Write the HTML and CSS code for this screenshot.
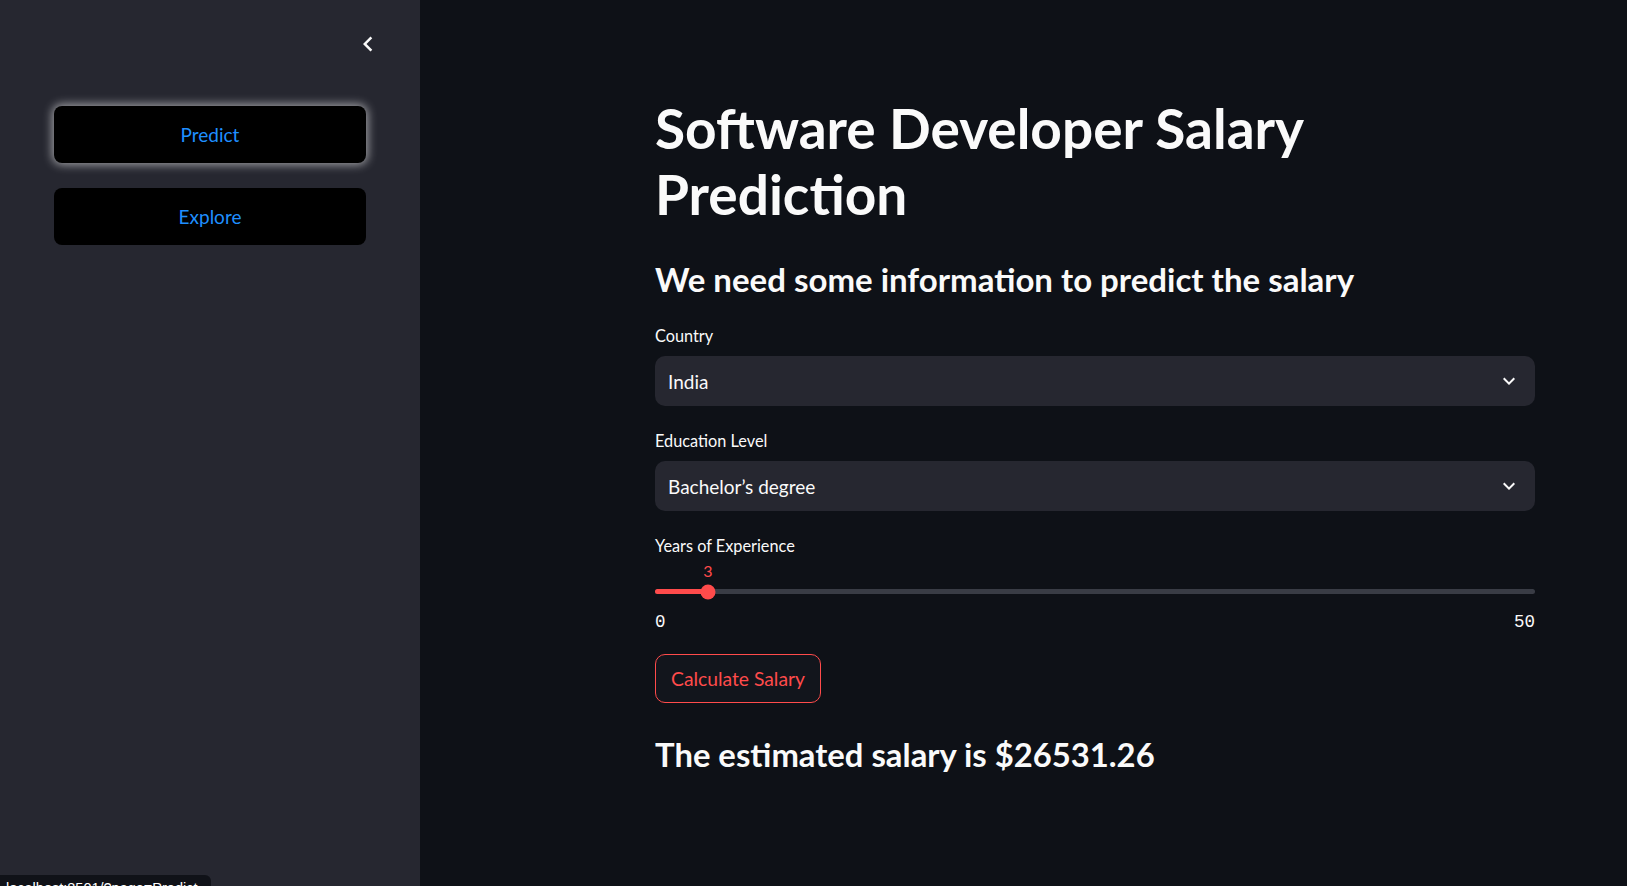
FILE: index.html
```html
<!DOCTYPE html>
<html lang="en">
<head>
<meta charset="utf-8">
<title>Salary Prediction</title>
<link rel="stylesheet" href="styles.css">
</head>
<body>
<div class="app">
  <aside class="sidebar">
    <div class="sidebar-head">
      <svg class="collapse-icon" viewBox="0 0 24 24" width="30" height="30"><path d="M15.41 7.41L14 6l-6 6 6 6 1.41-1.41L10.83 12z" fill="#fafafa"/></svg>
    </div>
    <nav class="nav">
      <div class="nav-btn active">Predict</div>
      <div class="nav-btn">Explore</div>
    </nav>
  </aside>
  <main class="main">
    <div class="content">
      <h1 class="title">Software Developer Salary Prediction</h1>
      <h3 class="subtitle">We need some information to predict the salary</h3>

      <label class="field-label">Country</label>
      <div class="select">
        <span class="select-value">India</span>
        <svg class="select-icon" viewBox="0 0 24 24" width="24" height="24"><path d="M16.59 8.59L12 13.17 7.41 8.59 6 10l6 6 6-6z" fill="#fafafa"/></svg>
      </div>

      <label class="field-label">Education Level</label>
      <div class="select">
        <span class="select-value">Bachelor’s degree</span>
        <svg class="select-icon" viewBox="0 0 24 24" width="24" height="24"><path d="M16.59 8.59L12 13.17 7.41 8.59 6 10l6 6 6-6z" fill="#fafafa"/></svg>
      </div>

      <label class="field-label">Years of Experience</label>
      <div class="slider">
        <div class="slider-value-row"><span class="slider-value" style="left:6%">3</span></div>
        <div class="slider-track">
          <div class="slider-fill" style="width:6%"></div>
          <div class="slider-thumb" style="left:6%"></div>
        </div>
        <div class="slider-ticks"><span>0</span><span>50</span></div>
      </div>

      <button class="calc-btn">Calculate Salary</button>

      <h3 class="result">The estimated salary is $26531.26</h3>
    </div>
  </main>
</div>
<div class="status">localhost:8501/?page=Predict</div>
</body>
</html>
```

FILE: styles.css
```css
* { box-sizing: border-box; }
html, body { margin: 0; height: 100%; }
body {
  background: #0e1117;
  color: #fafafa;
  font-family: Lato, "Noto Sans", sans-serif;
  overflow: hidden;
}
.app { display: flex; height: 100vh; }

.sidebar {
  flex: 0 0 420px;
  background: #262730;
  padding: 29px 54px 0;
  display: flex;
  flex-direction: column;
}
.sidebar-head {
  display: flex;
  justify-content: flex-end;
  height: 30px;
  margin-right: -17px;
}
.collapse-icon { display: block; }
.nav {
  margin-top: 47px;
  display: flex;
  flex-direction: column;
  gap: 25px;
}
.nav-btn {
  height: 57px;
  background: #000;
  border-radius: 8px;
  color: #1f8fff;
  font-size: 19px;
  display: flex;
  align-items: center;
  justify-content: center;
}
.nav-btn.active { box-shadow: 0 0 10px 2px rgba(255,255,255,0.55); }

.main { flex: 1; padding: 95px 0 0 235px; }
.content { width: 880px; display: flex; flex-direction: column; align-items: flex-start; }

.title {
  margin: 0;
  font-size: 55px;
  font-weight: 700;
  line-height: 66px;
  width: 100%;
}
.subtitle {
  margin: 30px 0 0;
  font-size: 33px;
  font-weight: 700;
  line-height: 44px;
}
.field-label {
  display: block;
  margin-top: 25px;
  font-size: 16.3px;
  line-height: 20px;
}
.select + .field-label { margin-top: 25px; }

.select {
  margin-top: 10px;
  width: 100%;
  height: 50px;
  background: #262730;
  border-radius: 10px;
  display: flex;
  align-items: center;
  justify-content: space-between;
  padding: 0 14px 0 13px;
}
.select-value { font-size: 19px; }
.select-icon { display: block; }

.slider { width: 100%; }
.slider-value-row { position: relative; height: 20px; margin-top: 5px; }
.slider-value {
  position: absolute;
  top: 0;
  transform: translateX(-50%);
  color: #ff4b4b;
  font-size: 16px;
  line-height: 20px;
}
.slider-track {
  position: relative;
  margin-top: 8px;
  height: 5px;
  border-radius: 3px;
  background: #393c45;
}
.slider-fill {
  height: 100%;
  border-radius: 3px;
  background: #ff4b4b;
}
.slider-thumb {
  position: absolute;
  top: 50%;
  width: 15px;
  height: 15px;
  border-radius: 50%;
  background: #ff4b4b;
  transform: translate(-50%, -50%);
}
.slider-ticks {
  margin-top: 18px;
  display: flex;
  justify-content: space-between;
  font-family: "Liberation Mono", "DejaVu Sans Mono", monospace;
  font-size: 17.5px;
  line-height: 20px;
}

.calc-btn {
  margin-top: 22px;
  height: 49px;
  padding: 0 15px;
  background: #12151c;
  color: #ff4b4b;
  border: 1px solid #ff4b4b;
  border-radius: 10px;
  font-family: Lato, "Noto Sans", sans-serif;
  font-size: 19.3px;
}
.result {
  margin: 30px 0 0;
  font-size: 32.8px;
  font-weight: 700;
  line-height: 44px;
}

.status {
  position: fixed;
  left: 0;
  bottom: -12px;
  width: 211px;
  height: 23px;
  padding: 6px 0 0 6px;
  background: #101218;
  border-top-right-radius: 6px;
  color: #fff;
  font-family: "Liberation Sans", Arial, sans-serif;
  font-size: 14.5px;
  line-height: 15px;
  white-space: nowrap;
  overflow: hidden;
}
```
